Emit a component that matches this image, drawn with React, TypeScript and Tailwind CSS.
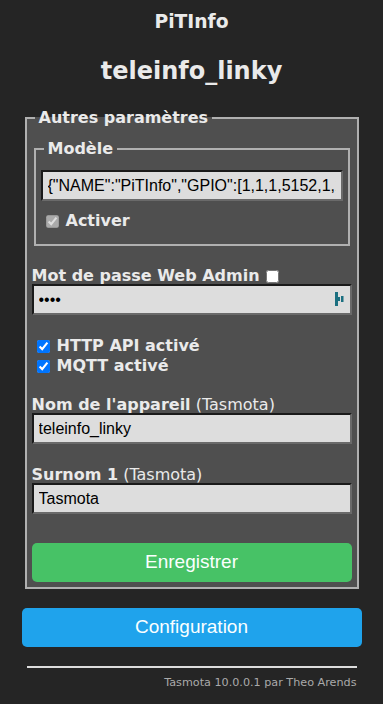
import React from "react";

const V = { fontFamily: '"DejaVu Sans", Verdana, sans-serif' };
const A = { fontFamily: '"Liberation Sans", Arial, sans-serif' };

function Field({ value, type = "text" }: { value: string; type?: string }) {
  return (
    <input
      readOnly
      type={type}
      value={value}
      style={A}
      className="block w-full h-[31px] bg-[#dddddd] text-black text-[16px] px-[5px] border-2 border-t-[#1a1a1a] border-l-[#1a1a1a] border-b-[#6a6a6a] border-r-[#6a6a6a] outline-none"
    />
  );
}

export default function App() {
  return (
    <div className="min-h-[704px] bg-[#252525] text-[#eaeaea]" style={V}>
      <div className="w-[340px] mx-auto pt-[11px]">
        <h3 className="text-center font-bold text-[18.72px] leading-[22px] mb-[24px]">PiTInfo</h3>
        <h2 className="text-center font-bold text-[24px] leading-[28px] mb-[24px]">teleinfo_linky</h2>

        <fieldset className="mx-[3px] border-2 border-[#b0b0b0] bg-[#4f4f4f] px-[5px] pb-[5px] pt-[3px]">
          <legend className="font-bold text-[16px] px-[4px] ml-[3px] leading-[18px]">Autres paramètres</legend>

          <fieldset className="mx-[2px] mt-[10px] border-2 border-[#b0b0b0] px-[5px] pb-[5px] pt-[12px]">
            <legend className="font-bold text-[16px] px-[4px] ml-[3px] leading-[18px]">Modèle</legend>
            <Field value={'{"NAME":"PiTInfo","GPIO":[1,1,1,5152,1,1,1,1,1,1,1,1,1,1],"FLAG":0,"BASE":18}'} />
            <label className="flex items-center mt-[10px] mb-[8px] font-bold text-[16px] leading-[20px]">
              <input type="checkbox" checked disabled readOnly className="ml-[5px] mr-[7px] w-[13px] h-[13px]" />
              Activer
            </label>
          </fieldset>

          <div className="mt-[21px] font-bold text-[16px] leading-[18px] flex items-center">
            Mot de passe Web Admin
            <input type="checkbox" readOnly className="ml-[6px] w-[13px] h-[13px]" />
          </div>
          <div className="relative -mt-[1px]">
            <Field value="••••" />
            <svg className="absolute right-[8px] top-[8px]" width="9" height="14" viewBox="0 0 9 14">
              <path d="M0 0h3v5h2v4H3v5H0z" fill="#1b6f80" />
              <rect x="6" y="4" width="2.5" height="6" fill="#1b6f80" />
            </svg>
          </div>

          <label className="flex items-center mt-[21px] font-bold text-[16px] leading-[20px]">
            <input type="checkbox" checked readOnly className="ml-[5px] mr-[7px] w-[13px] h-[13px]" />
            HTTP API activé
          </label>
          <label className="flex items-center font-bold text-[16px] leading-[20px]">
            <input type="checkbox" checked readOnly className="ml-[5px] mr-[7px] w-[13px] h-[13px]" />
            MQTT activé
          </label>

          <div className="mt-[21px] text-[16px] leading-[16px]">
            <b>Nom de l'appareil</b> <span>(Tasmota)</span>
          </div>
          <Field value="teleinfo_linky" />

          <div className="mt-[23px] text-[16px] leading-[16px]">
            <b>Surnom 1</b> <span>(Tasmota)</span>
          </div>
          <Field value="Tasmota" />

          <button
            style={A}
            className="block w-full mt-[29px] h-[39px] rounded-[5px] bg-[#47c266] text-[#faffff] text-[19px]"
          >
            Enregistrer
          </button>
        </fieldset>

        <button
          style={A}
          className="block w-full mt-[19px] h-[39px] rounded-[5px] bg-[#1fa3ec] text-[#faffff] text-[19px]"
        >
          Configuration
        </button>

        <div className="mx-[5px] mt-[19px] h-[2px] bg-[#dddddd]" />
        <div className="text-right text-[11.2px] text-[#aaaaaa] mr-[5px] mt-[7px]">Tasmota 10.0.0.1 par Theo Arends</div>
      </div>
    </div>
  );
}
